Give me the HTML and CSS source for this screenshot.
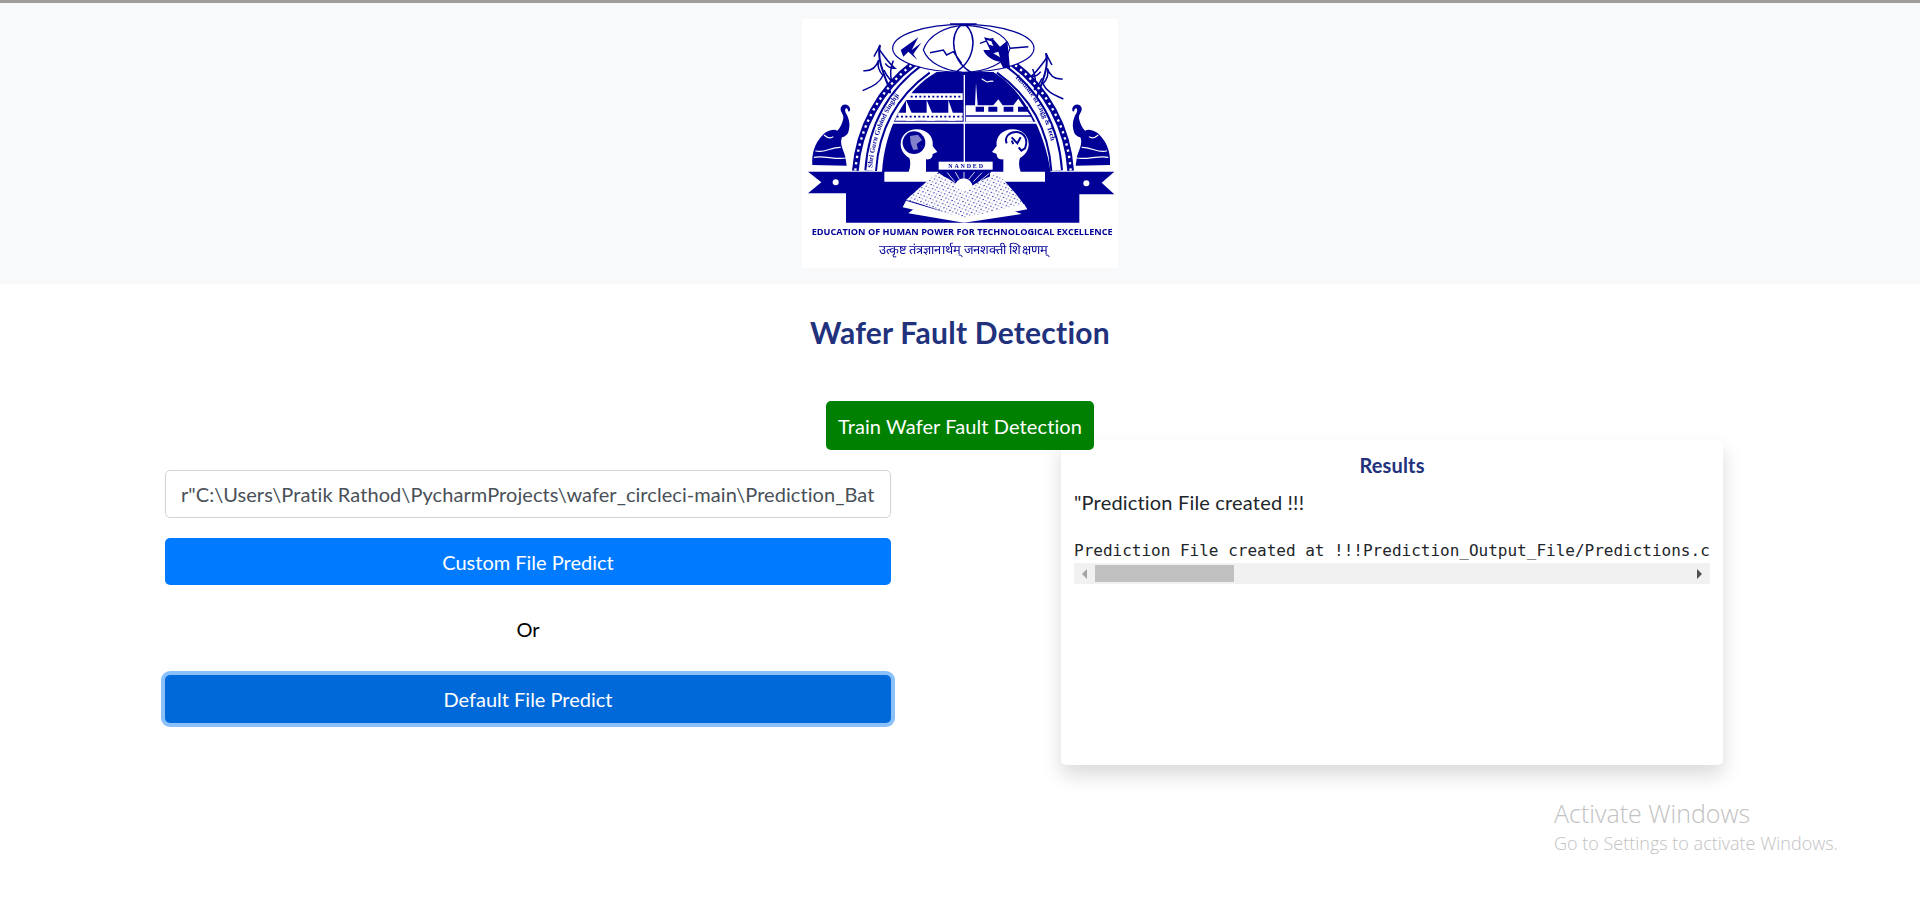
FILE: index.html
```html
<!DOCTYPE html>
<html lang="en">
<head>
<meta charset="utf-8">
<title>Wafer Fault Detection</title>
<link rel="stylesheet" href="styles.css">
</head>
<body>
<header class="banner">
  <svg class="logo" viewBox="66 57 948 747" role="img" aria-label="Institute logo">
    <defs>
      <pattern id="dots" width="15" height="13" patternUnits="userSpaceOnUse" patternTransform="rotate(-18)">
        <rect class="f-w" width="15" height="13"/>
        <circle class="f-b" cx="5" cy="4" r="2"/>
        <circle class="f-b" cx="12" cy="10" r="1.5"/>
      </pattern>
      <filter id="soft" x="0" y="0" width="100%" height="100%"><feGaussianBlur stdDeviation="2"/></filter>
      <path id="bandL" d="M276,512 C284,400 330,290 432,212"/>
      <path id="bandR" d="M700,228 C770,290 820,390 826,512"/>
      <g id="elephant">
        <path class="f-b" d="M97,495 C95,460 104,430 128,405 C140,392 160,385 172,392 C180,384 186,372 190,356 C192,342 180,336 182,324 C186,310 206,310 210,325 C212,336 204,338 204,330 C200,320 192,326 197,338 C206,352 212,372 206,392 C204,404 194,410 186,412 C178,430 190,450 196,470 L200,497 Z"/>
        <path class="s-w3" d="M106,452 C130,462 155,440 182,442 M102,472 C130,465 165,480 198,474 M132,405 C140,412 150,418 160,410"/>
      </g>
      <g id="cane">
        <path class="s-b3" d="M300,135 C292,170 305,205 318,240 C326,258 330,268 330,280"/>
        <path class="s-b2" d="M250,212 C270,214 288,205 296,180 C290,200 298,215 310,228 M248,272 C268,262 296,255 310,225 M296,146 C310,165 325,188 345,205 C335,205 322,200 316,190 M340,182 C330,205 330,225 335,245 C325,232 318,225 312,210 M282,170 C290,155 296,145 300,135"/>
      </g>
      <g id="head">
        <path class="f-w" d="M410,388 C442,388 462,412 458,438 L472,456 L458,462 C458,474 450,480 438,478 L438,515 L475,515 L475,545 L313,545 L313,515 L386,515 C392,500 392,484 388,474 C372,464 362,450 362,432 C362,406 384,388 410,388 Z"/>
      </g>
    </defs>
    <g filter="url(#soft)">
      <rect class="f-w" x="66" y="57" width="948" height="747"/>

      <use href="#cane"/>
      <use href="#cane" transform="matrix(-1 0 0 1 1098 25)"/>
      <use href="#elephant"/>
      <use href="#elephant" transform="matrix(-1 0 0 1 1087 0)"/>

      <path class="s-b20" d="M226,512 C236,385 300,265 402,190"/>
      <path class="s-w-dots" d="M226,512 C236,385 300,265 402,190"/>
      <path class="s-b20" d="M872,512 C864,385 800,265 698,190"/>
      <path class="s-w-dots" d="M872,512 C864,385 800,265 698,190"/>
      <path class="s-b34" d="M272,512 C280,395 328,285 440,205"/>
      <path class="s-w24" d="M272,512 C280,395 328,285 440,205"/>
      <path class="s-b34" d="M830,512 C822,395 772,285 660,205"/>
      <path class="s-w24" d="M830,512 C822,395 772,285 660,205"/>
      <path class="f-b" d="M306,518 C312,395 372,270 470,216 L640,216 C730,270 795,395 812,518 Z"/>

      <text class="band-text"><textPath href="#bandL" startOffset="8">Shri Guru Gobind Singhji</textPath></text>
      <text class="band-text"><textPath href="#bandR" startOffset="8">Institute of Engg &amp; Tech</textPath></text>

      <path class="f-w" d="M378,300 L405,362 L378,362 Z M440,300 L466,362 L440,362 Z M505,300 L527,362 L505,362 Z"/>
      <path class="f-w" d="M345,362 L356,338 L548,338 L548,362 Z"/>
      <path class="f-w" d="M392,280 L548,280 L548,300 L372,300 Z"/>
      <path class="s-b-dash" d="M392,290 L548,290"/>
      <path class="s-b-dash" d="M350,350 L548,350"/>
      <path class="f-w" d="M557,365 L557,316 L585,316 L588,248 L593,316 L640,316 L655,298 L668,316 L700,316 L715,296 L728,316 L750,345 L760,365 Z"/>
      <path class="f-b" d="M587,320 H612 V335 H587 Z M625,320 H652 V335 H625 Z M671,320 H700 V335 H671 Z M714,320 H744 V335 H714 Z M557,346 H755 V350 H557 Z"/>
      <path class="s-w3" d="M605,236 C612,240 618,246 622,246 C628,244 634,242 640,244"/>
      <path class="s-w5" d="M338,368 H770"/>
      <path class="s-w4" d="M553,225 V486"/>

      <use href="#head"/>
      <use href="#head" transform="matrix(-1 0 0 1 1108 0)"/>
      <circle class="f-b" cx="402" cy="428" r="34"/>
      <path class="f-w op5" d="M390,408 L414,404 L426,420 L410,432 L414,448 L400,450 L392,430 Z"/>
      <path class="s-b3" d="M680,430 C672,410 690,394 712,396 C735,400 745,420 735,445 L724,452 L716,442 M695,412 L712,430 L722,412 M700,432 L695,422"/>

      <rect class="f-w" x="476" y="485" width="162" height="24"/>
      <text class="nanded" x="557" y="505" textLength="104">NANDED</text>

      <path class="f-b" d="M84,515 L1003,515 L965,548 L1003,583 L898,583 L898,668 L198,668 L198,580 L84,580 L124,547 Z M313,515 V545 H475 V515 Z M630,515 V545 H795 V515 Z" fill-rule="evenodd"/>
      <path fill="url(#dots)" d="M378,600 C410,570 445,540 472,518 C500,535 530,545 552,575 L552,660 C500,640 440,615 378,600 Z"/>
      <path fill="url(#dots)" d="M552,575 C580,550 620,535 650,518 C680,550 710,580 735,618 C680,628 610,640 552,660 Z"/>
      <path class="f-w" d="M378,602 L368,622 L552,664 L742,628 L732,612 L552,654 Z"/>
      <path class="f-w" d="M385,640 L552,668 L725,642 L700,632 L552,658 L400,628 Z"/>
      <path class="f-w" d="M524,562 A27,27 0 0 1 578,562 L552,576 Z"/>
      <path class="s-w2" d="M510,548 L478,520 M524,545 L502,518 M538,538 L526,516 M552,535 V516 M566,538 L584,516 M580,545 L606,518 M594,548 L628,520"/>
      <circle class="f-w" cx="167" cy="547" r="9"/>
      <circle class="f-w" cx="919" cy="550" r="9"/>

      <ellipse class="globe" cx="550" cy="145" rx="212" ry="72"/>
      <path class="globe" d="M430,150 C445,105 500,78 550,76 C620,78 680,100 690,145 C680,190 620,215 550,217 C495,212 445,190 430,150 Z"/>
      <path class="s-b2" d="M545,72 C505,110 515,185 578,220 M555,72 C595,110 585,185 520,220 M450,158 L490,150 L500,165 L520,155 L545,190 M600,130 L640,115 M690,145 L745,140 M510,72 H590"/>
      <path class="f-b" d="M362,150 L415,112 L395,150 L424,128 L400,162 L412,180 L385,155 L370,170 Z"/>
      <path class="f-b" d="M612,112 L640,118 L660,140 L682,122 L690,205 L670,205 L660,185 C640,185 615,165 610,150 L630,150 Z"/>
      <path class="f-w" d="M620,120 L634,124 L640,138 L628,134 Z M640,160 L655,155 L660,172 Z"/>

      <text class="motto" x="95" y="706" textLength="903" lengthAdjust="spacingAndGlyphs">EDUCATION OF HUMAN POWER FOR TECHNOLOGICAL EXCELLENCE</text>
      <text class="motto-hi" x="296" y="762" textLength="508" lengthAdjust="spacingAndGlyphs">उत्कृष्ट तंत्रज्ञानार्थम् जनशक्ती शिक्षणम्</text>
    </g>
  </svg>
</header>

<main class="page">
  <h1 class="title">Wafer Fault Detection</h1>
  <div class="train-wrap"><button class="btn btn-train" type="button">Train Wafer Fault Detection</button></div>
  <div class="columns">
    <section class="predict">
      <input class="path-input" type="text" value='r"C:\Users\Pratik Rathod\PycharmProjects\wafer_circleci-main\Prediction_Batch_Files"'>
      <button class="btn btn-primary" type="button">Custom File Predict</button>
      <p class="or">Or</p>
      <button class="btn btn-active" type="button">Default File Predict</button>
    </section>
    <section class="results">
      <h6 class="results-title">Results</h6>
      <p class="results-msg">"Prediction File created !!!</p>
      <pre class="results-pre">Prediction File created at !!!Prediction_Output_File/Predictions.c</pre>
      <div class="hscroll" aria-hidden="true">
        <span class="hscroll-btn"><i class="tri tri-left"></i></span>
        <span class="hscroll-thumb"></span>
        <span class="hscroll-gap"></span>
        <span class="hscroll-btn"><i class="tri tri-right"></i></span>
      </div>
    </section>
  </div>
</main>

<aside class="activate">
  <div class="activate-main">Activate Windows</div>
  <div class="activate-sub">Go to Settings to activate Windows.</div>
</aside>
</body>
</html>
```

FILE: styles.css
```css
* { box-sizing: border-box; }
html, body { margin: 0; padding: 0; height: 904px; overflow: hidden; background: #fff; }
body { font-family: Lato, "Open Sans", sans-serif; font-size: 20px; color: #212529; position: relative; font-variant-ligatures: none; }

.banner { height: 284px; background: #f8f9fa; border-top: 3px solid #a39c9c; padding-top: 16px; display: flex; justify-content: center; align-items: flex-start; }
.logo { width: 316px; height: 249px; display: block; }

.f-w { fill: #fff; }
.f-b { fill: #000096; }
.op5 { opacity: .5; }
.globe { fill: #fff; stroke: #000096; stroke-width: 3.5; }
.s-b2, .s-b3, .s-w2, .s-w3, .s-w4, .s-w5, .s-b20, .s-b34, .s-w24, .s-w-dots, .s-b-dash { fill: none; }
.s-b2 { stroke: #000096; stroke-width: 4.5; }
.s-b3 { stroke: #000096; stroke-width: 6; }
.s-w2 { stroke: #fff; stroke-width: 2.5; }
.s-w3 { stroke: #fff; stroke-width: 3.5; }
.s-w4 { stroke: #fff; stroke-width: 4; }
.s-w5 { stroke: #fff; stroke-width: 6; }
.s-b20 { stroke: #000096; stroke-width: 20; }
.s-w-dots { stroke: #fff; stroke-width: 7; stroke-dasharray: 7 12; }
.s-b34 { stroke: #000096; stroke-width: 38; }
.s-w24 { stroke: #fff; stroke-width: 26; }
.s-b-dash { stroke: #000096; stroke-width: 5; stroke-dasharray: 6 7; }
.band-text { font-family: "Liberation Serif", serif; font-weight: 700; font-size: 21px; fill: #000096; }
.nanded { font-family: "Liberation Serif", serif; font-weight: 700; font-size: 18px; fill: #000096; text-anchor: middle; }
.motto { font-family: "Open Sans", sans-serif; font-weight: 700; font-size: 24px; fill: #000096; }
.motto-hi { font-family: "Noto Sans CJK SC", "Liberation Sans", sans-serif; font-size: 38px; fill: #000096; }

.page { display: flex; flex-direction: column; }
.title { margin: 28px 0 0; height: 40px; line-height: 40px; font-size: 30px; font-weight: 700; letter-spacing: .24px; color: #21317c; text-align: center; }
.train-wrap { display: flex; justify-content: center; margin-top: 49px; position: relative; z-index: 1; }

.btn { display: block; border: 0; border-radius: 5px; color: #fff; font-family: inherit; font-size: 20px; line-height: 30px; text-align: center; font-variant-ligatures: none; }
.btn-train { width: 268px; height: 49px; padding: 0; background: #008000; letter-spacing: .1px; }

.columns { display: grid; grid-template-columns: 726px 662px; column-gap: 170px; padding-left: 165px; margin-top: -10px; }
.predict { padding-top: 30px; display: flex; flex-direction: column; }
.path-input { width: 100%; height: 48px; padding: 0 15px; border: 1px solid #ced4da; border-radius: 5px; font-family: inherit; font-size: 20px; letter-spacing: .07px; color: #495057; background: #fff; font-variant-ligatures: none; }
.btn-primary { width: 100%; height: 47px; margin-top: 20px; background: #007bff; }
.or { margin: 29px 0 31px; height: 30px; line-height: 30px; text-align: center; color: #000; }
.btn-active { width: 100%; height: 48px; background: #0069d9; box-shadow: 0 0 0 4px #8ac0fb; }

.results { height: 325px; padding: 13px; background: #fff; border-radius: 5px; box-shadow: 0 10px 20px rgba(0, 0, 0, .15); }
.results-title { margin: 0; height: 24px; line-height: 24px; font-size: 20px; font-weight: 700; letter-spacing: .15px; color: #21317c; text-align: center; }
.results-msg { margin: 11px 0 0; line-height: 28px; font-size: 20px; letter-spacing: .18px; }
.results-pre { margin: 22px 0 0; height: 25px; overflow: hidden; font-family: "DejaVu Sans Mono", "Liberation Mono", monospace; font-size: 16px; line-height: 25px; color: #212529; }

.hscroll { display: flex; height: 21px; background: #f1f1f1; }
.hscroll-btn { flex: none; width: 21px; display: flex; align-items: center; justify-content: center; }
.hscroll-thumb { flex: none; width: 139px; margin: 2px 0; background: #c1c1c1; }
.hscroll-gap { flex: 1; }
.tri { display: block; width: 0; height: 0; border-style: solid; border-color: transparent; border-width: 5px 0; }
.tri-left { border-right: 5px solid #a3a3a3; }
.tri-right { border-left: 5px solid #505050; }

.activate { position: absolute; left: 1554px; top: 796px; font-family: "Open Sans", sans-serif; color: #c2c2c2; pointer-events: none; }
.activate-main { font-size: 25px; line-height: 35px; font-weight: 300; }
.activate-sub { font-size: 18px; line-height: 24px; font-weight: 300; }
```
